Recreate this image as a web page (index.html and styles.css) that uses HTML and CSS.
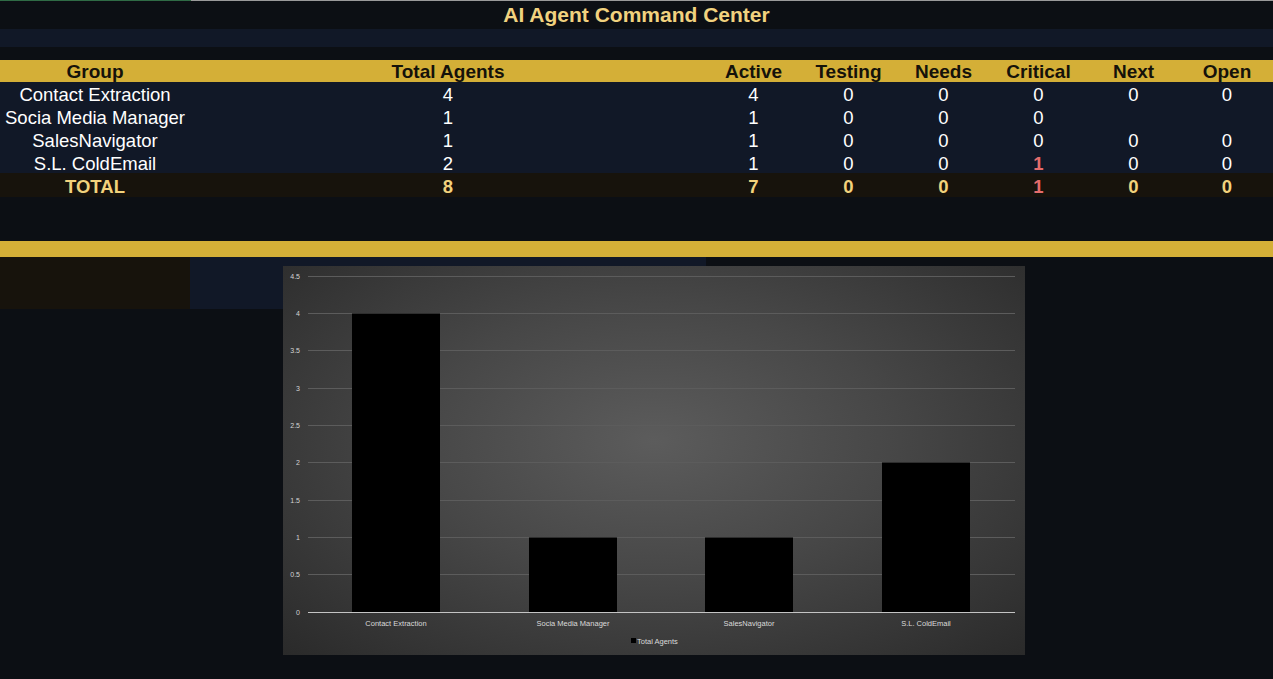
FILE: index.html
```html
<!DOCTYPE html>
<html>
<head>
<meta charset="utf-8">
<link rel="stylesheet" href="styles.css">
</head>
<body>
<div class="page">
  <div class="topline"><div class="topline-green"></div><div class="topline-grey"></div></div>
  <div class="title">AI Agent Command Center</div>
  <div class="band-navy"></div>
  <div class="spacer-a"></div>
  <div class="table">
    <div class="cell head">Group</div>
    <div class="cell head">Total Agents</div>
    <div class="cell head">Active</div>
    <div class="cell head">Testing</div>
    <div class="cell head">Needs</div>
    <div class="cell head">Critical</div>
    <div class="cell head">Next</div>
    <div class="cell head">Open</div>

    <div class="cell row">Contact Extraction</div>
    <div class="cell row">4</div>
    <div class="cell row">4</div>
    <div class="cell row">0</div>
    <div class="cell row">0</div>
    <div class="cell row">0</div>
    <div class="cell row">0</div>
    <div class="cell row">0</div>

    <div class="cell row">Socia Media Manager</div>
    <div class="cell row">1</div>
    <div class="cell row">1</div>
    <div class="cell row">0</div>
    <div class="cell row">0</div>
    <div class="cell row">0</div>
    <div class="cell row"></div>
    <div class="cell row"></div>

    <div class="cell row">SalesNavigator</div>
    <div class="cell row">1</div>
    <div class="cell row">1</div>
    <div class="cell row">0</div>
    <div class="cell row">0</div>
    <div class="cell row">0</div>
    <div class="cell row">0</div>
    <div class="cell row">0</div>

    <div class="cell row">S.L. ColdEmail</div>
    <div class="cell row">2</div>
    <div class="cell row">1</div>
    <div class="cell row">0</div>
    <div class="cell row">0</div>
    <div class="cell row crit">1</div>
    <div class="cell row">0</div>
    <div class="cell row">0</div>

    <div class="cell total">TOTAL</div>
    <div class="cell total">8</div>
    <div class="cell total">7</div>
    <div class="cell total">0</div>
    <div class="cell total">0</div>
    <div class="cell total crit">1</div>
    <div class="cell total">0</div>
    <div class="cell total">0</div>
  </div>
  <div class="spacer-b"></div>
  <div class="band-gold"></div>
  <div class="lower">
    <div class="lower-brown"></div>
    <div class="lower-navy"></div>
  </div>

  <div class="chart">
    <svg width="742" height="389" viewBox="0 0 742 389" class="chart-svg">
      <g class="grid">
        <line x1="25" x2="732" y1="10.5" y2="10.5"/>
        <line x1="25" x2="732" y1="47.5" y2="47.5"/>
        <line x1="25" x2="732" y1="84.5" y2="84.5"/>
        <line x1="25" x2="732" y1="122.5" y2="122.5"/>
        <line x1="25" x2="732" y1="159.5" y2="159.5"/>
        <line x1="25" x2="732" y1="196.5" y2="196.5"/>
        <line x1="25" x2="732" y1="234.5" y2="234.5"/>
        <line x1="25" x2="732" y1="271.5" y2="271.5"/>
        <line x1="25" x2="732" y1="308.5" y2="308.5"/>
      </g>
      <g class="ylab">
        <text x="17" y="13">4.5</text>
        <text x="17" y="50">4</text>
        <text x="17" y="87">3.5</text>
        <text x="17" y="125">3</text>
        <text x="17" y="162">2.5</text>
        <text x="17" y="199">2</text>
        <text x="17" y="237">1.5</text>
        <text x="17" y="274">1</text>
        <text x="17" y="311">0.5</text>
        <text x="17" y="349">0</text>
      </g>
      <g class="bars">
        <rect x="69" y="47.5" width="88" height="299"/>
        <rect x="246" y="271.5" width="88" height="75"/>
        <rect x="422" y="271.5" width="88" height="75"/>
        <rect x="599" y="196.5" width="88" height="150"/>
      </g>
      <line class="axis" x1="25" x2="732" y1="346.5" y2="346.5"/>
      <g class="xlab">
        <text x="113" y="360">Contact Extraction</text>
        <text x="290" y="360">Socia Media Manager</text>
        <text x="466" y="360">SalesNavigator</text>
        <text x="643" y="360">S.L. ColdEmail</text>
      </g>
      <rect class="legend-key" x="348" y="372" width="5" height="5"/>
      <text class="legend" x="354" y="378">Total Agents</text>
    </svg>
  </div>
</div>
</body>
</html>
```
FILE: styles.css
```css
* { box-sizing: border-box; }
html, body { margin: 0; padding: 0; }
body {
  background: #0c0f14;
  font-family: "Liberation Sans", Arial, sans-serif;
  width: 1273px;
  height: 679px;
  overflow: hidden;
}
.page {
  position: relative;
  width: 1273px;
  height: 679px;
  background: #0c0f14;
}
.topline {
  display: flex;
  height: 1px;
}
.topline-green { width: 191px; background: #2f6b45; }
.topline-grey { flex: 1; background: #9a9a9a; }
.title {
  height: 28px;
  line-height: 27px;
  text-align: center;
  color: #f1d27f;
  font-weight: bold;
  font-size: 21px;
}
.band-navy { height: 18px; background: #111827; }
.spacer-a { height: 13px; }
.table {
  display: grid;
  grid-template-columns: 190px 516px 95px 95px 95px 95px 95px 1fr;
  grid-template-rows: 22px 23px 23px 23px 22px 24px;
}
.cell {
  display: flex;
  align-items: center;
  justify-content: center;
  white-space: nowrap;
  font-size: 18.5px;
}
.head {
  background: #d4af37;
  color: #15120a;
  font-weight: bold;
  font-size: 19px;
  padding-top: 2px;
}
.row {
  background: #111827;
  color: #ffffff;
  padding-top: 3px;
}
.total {
  background: #17130c;
  color: #f2d27c;
  font-weight: bold;
  padding-top: 3px;
}
.crit { color: #e46c6c; font-weight: bold; }
.spacer-b { height: 44px; }
.band-gold { height: 16px; background: #d4af37; }
.lower {
  display: flex;
  height: 52px;
}
.lower-brown { width: 190px; background: #17130c; }
.lower-navy { width: 516px; background: #111827; }
.chart {
  position: absolute;
  left: 283px;
  top: 266px;
  width: 742px;
  height: 389px;
  background: radial-gradient(ellipse at 50% 45%, #5c5c5c 0%, #474747 45%, #2a2a2a 100%);
}
.chart-svg { display: block; }
.grid line { stroke: #5c5c5c; stroke-width: 1; }
.axis { stroke: #c4c4c4; stroke-width: 1; }
.bars rect { fill: #000000; }
.ylab text {
  fill: #d4d4d4;
  font-size: 7px;
  text-anchor: end;
  font-family: "Liberation Sans Narrow", "Liberation Sans", sans-serif;
}
.xlab text {
  fill: #dadada;
  font-size: 7.5px;
  text-anchor: middle;
  font-family: "Liberation Sans Narrow", "Liberation Sans", sans-serif;
}
.legend-key { fill: #000000; }
.legend {
  fill: #dadada;
  font-size: 7.5px;
  font-family: "Liberation Sans Narrow", "Liberation Sans", sans-serif;
}
```
